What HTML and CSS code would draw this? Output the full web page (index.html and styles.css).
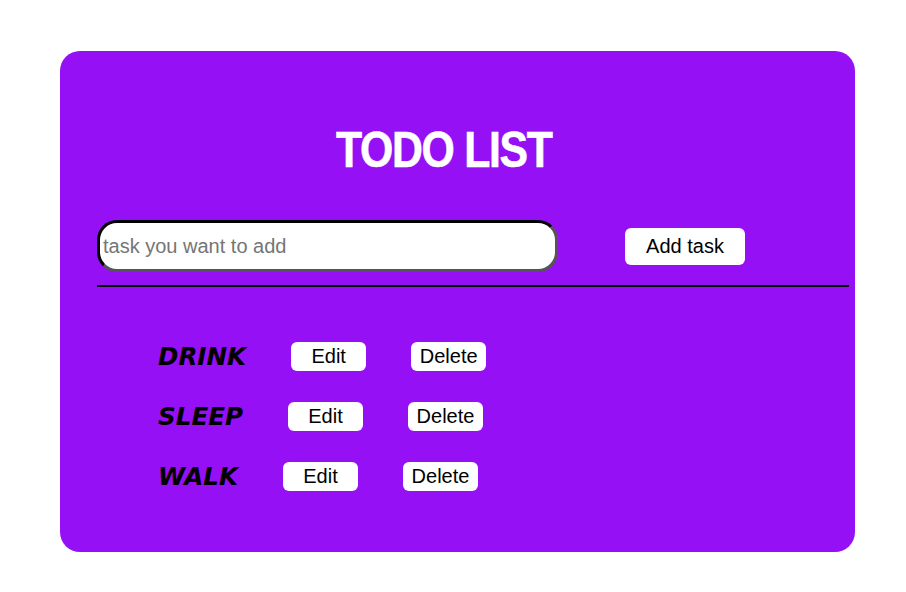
FILE: index.html
```html
<!DOCTYPE html>
<html>
<head>
<meta charset="utf-8">
<link rel="stylesheet" href="styles.css">
</head>
<body>
<div class="card">
  <h1 class="title"><span class="title-text">TODO LIST</span></h1>
  <div class="add-row">
    <input class="task-input" type="text" placeholder="task you want to add">
    <button class="btn btn-add">Add task</button>
  </div>
  <hr class="divider">
  <ul class="tasks">
    <li class="task"><span class="task-name">DRINK</span><button class="btn btn-small">Edit</button><button class="btn btn-small">Delete</button></li>
    <li class="task"><span class="task-name">SLEEP</span><button class="btn btn-small">Edit</button><button class="btn btn-small">Delete</button></li>
    <li class="task"><span class="task-name">WALK</span><button class="btn btn-small">Edit</button><button class="btn btn-small">Delete</button></li>
  </ul>
</div>
</body>
</html>
```
FILE: styles.css
```css
html, body {
  margin: 0;
  padding: 0;
  background: #ffffff;
}
.card {
  box-sizing: border-box;
  margin: 51px 0 0 60px;
  width: 795px;
  height: 501px;
  background: #9510f5;
  border-radius: 20px;
  padding: 74px 0 0 37px;
}
.title {
  margin: 0;
  height: 50px;
  line-height: 50px;
  font-family: "Liberation Sans", Arial, sans-serif;
  font-size: 50px;
  font-weight: 900;
  color: #ffffff;
  display: flex;
  padding-left: 239px;
}
.title-text {
  display: inline-block;
  letter-spacing: -1.5px;
  transform: scaleX(0.855);
  transform-origin: left center;
  -webkit-text-stroke: 0.6px #ffffff;
}
.add-row {
  display: flex;
  align-items: center;
  margin-top: 45px;
  height: 52px;
}
.task-input {
  box-sizing: border-box;
  width: 461px;
  height: 52px;
  border: 3px inset #444;
  border-top-color: #000;
  border-left-color: #000;
  border-bottom-color: #555;
  border-right-color: #555;
  border-radius: 20px;
  padding: 0 3px;
  font-family: "Liberation Sans", Arial, sans-serif;
  font-size: 20px;
  background: #fff;
  outline: none;
}
.task-input::placeholder {
  color: #757575;
}
.btn {
  border: none;
  background: #ffffff;
  color: #000000;
  font-family: "Liberation Sans", Arial, sans-serif;
  font-size: 20px;
  border-radius: 6px;
  padding: 0;
  cursor: pointer;
}
.btn-add {
  width: 120px;
  height: 37px;
  margin-left: 67px;
}
.divider {
  margin: 13px 0 0 0;
  width: 752px;
  height: 2px;
  border: none;
  background: #000;
}
.tasks {
  list-style: none;
  margin: 39px 0 0 0;
  padding: 0 0 0 61px;
}
.task {
  display: flex;
  align-items: center;
  height: 60px;
}
.task-name {
  font-family: "DejaVu Sans", Verdana, sans-serif;
  font-size: 24.6px;
  font-weight: bold;
  font-style: italic;
  color: #000;
}
.btn-small {
  width: 75px;
  height: 29px;
  margin-left: 45px;
}
```
